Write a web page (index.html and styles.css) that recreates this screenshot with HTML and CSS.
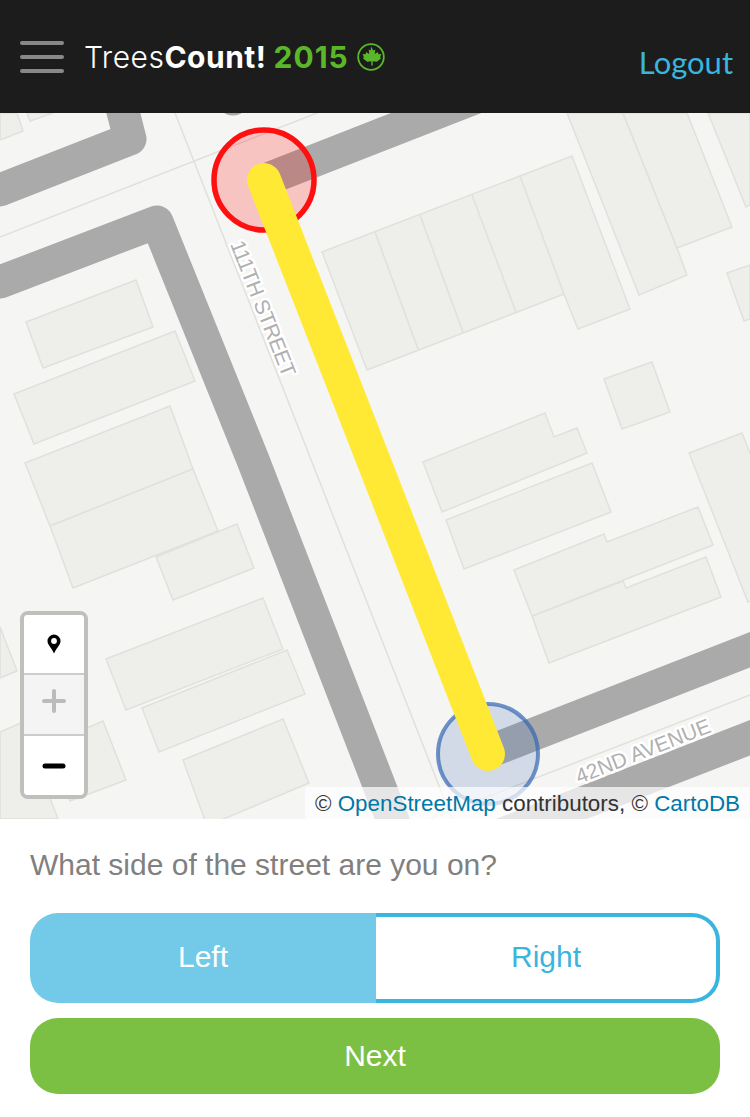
FILE: index.html
```html
<!DOCTYPE html>
<html lang="en">
<head>
    <meta charset="UTF-8">
    <title>TreesCount! 2015</title>
    <link rel="stylesheet" href="styles.css">
</head>
<body>
    <header class="topbar">
        <div class="burger"><span></span><span></span><span></span></div>
        <div class="logo">
            <span class="logo-light">Trees</span><span class="logo-bold">Count!</span>
            <span class="logo-year">2015</span>
            <svg class="logo-leaf" viewBox="0 0 28 28">
                <circle cx="14" cy="14" r="12.800" fill="none" stroke="#5ab72a" stroke-width="1.800"/>
                <path d="M14 3.500l2.300 4 2-1-.5 4.500 2.900-2 .8 2.300 2.800-.4-1.200 3.600 1.100.8-4.400 3.400-4.100-.5v4.300h-1.400v-4.300l-4.100.5-4.400-3.400 1.100-.8-1.200-3.600 2.800.4.800-2.300 2.900 2-.5-4.500 2 1z" fill="#5ab72a"/>
            </svg>
        </div>
        <a class="logout" href="#">Logout</a>
    </header>

    <main class="map">
        <svg class="map-svg" viewBox="0 113 750 706">
            <g class="roads">
                <polyline points="0,190 130,139 120,100"/>
                <polyline points="0,282 157,222 253,460 400,839"/>
                <line x1="265" y1="180" x2="500" y2="88"/>
                <line x1="488" y1="752" x2="770" y2="642"/>
                <line x1="770" y1="730" x2="500" y2="835"/>
                <line x1="233" y1="99" x2="233" y2="99"/>
            </g>
            <g class="lines">
                <line x1="175" y1="113" x2="452" y2="819"/>
                <line x1="0" y1="237" x2="317" y2="113"/>
                <line x1="430" y1="819" x2="750" y2="695"/>
                <line x1="0" y1="797" x2="8" y2="819"/>
            </g>
            <g class="blocks">
                <polygon points="0,140 23,131 17,113 0,113"/>
                <polygon points="27,113 30,121 53,113"/>
                <polygon points="26,322 136,280 153,327 43,368"/>
                <polygon points="14,394 175,331 195,381 34,444"/>
                <polygon points="25,463 170,406 193,469 50,526"/>
                <polygon points="50,526 193,469 218,531 73,588"/>
                <polygon points="156,557 237,524 254,568 173,600"/>
                <polygon points="106,659 263,598 283,649 126,710"/>
                <polygon points="142,708 287,650 305,694 159,752"/>
                <polygon points="183,760 283,719 309,783 207,826"/>
                <polygon points="0,627 17,671 0,678"/>
                <polygon points="0,732 21,723 58,819 0,819"/>
                <polygon points="48,745 103,721 126,780 70,801"/>
                <polygon points="322,252 572,156 630,309 578,329 564,294 367,370"/>
                <line x1="375" y1="232" x2="418" y2="349"/>
                <line x1="420" y1="215" x2="463" y2="332"/>
                <line x1="472" y1="195" x2="516" y2="312"/>
                <line x1="520" y1="176" x2="564" y2="294"/>
                <polygon points="567,113 639,295 687,275 677,248 623,113"/>
                <polygon points="623,113 677,248 732,227 687,113"/>
                <polygon points="708,113 746,207 750,205 750,113"/>
                <polygon points="604,379 652,362 670,412 622,429"/>
                <polygon points="727,273 750,265 750,319 744,321"/>
                <polygon points="423,462 545,413 554,437 577,428 587,453 442,512"/>
                <polygon points="446,520 592,463 611,512 464,569"/>
                <polygon points="532,616 623,581 626,588 706,557 721,597 549,663"/>
                <polygon points="514,570 604,534 607,542 698,507 713,545 532,616"/>
                <polygon points="689,453 742,433 752,458 752,601 748,602"/>
            </g>
            <text class="street street-tight" transform="translate(230 244) rotate(68.500)">111TH STREET</text>
            <text class="street" transform="translate(579 784) rotate(-21.500)">42ND AVENUE</text>
            <circle class="pin-start" cx="264" cy="180" r="50"/>
            <circle class="pin-end" cx="488" cy="754" r="50"/>
            <line class="route" x1="264" y1="180" x2="488" y2="754"/>
        </svg>

        <div class="controls">
            <button class="ctl ctl-locate" type="button">
                <svg width="14" height="20" viewBox="0 0 14 20"><path fill-rule="evenodd" d="M7 .5a6.500 6.500 0 0 0-6.500 6.500c0 4 3.500 6 6.500 12.500 3-6.500 6.500-8.500 6.500-12.500A6.500 6.500 0 0 0 7 .5zm0 3.600a2.900 2.900 0 1 1 0 5.800 2.900 2.900 0 0 1 0-5.800z"/></svg>
            </button>
            <button class="ctl ctl-plus" type="button">
                <svg width="24" height="24" viewBox="0 0 24 24"><path d="M12 2v20M2 12h20" stroke="#bbb" stroke-width="4" stroke-linecap="round"/></svg>
            </button>
            <button class="ctl ctl-minus" type="button">
                <svg width="24" height="24" viewBox="0 0 24 24"><path d="M3 12h18" stroke="#000" stroke-width="5" stroke-linecap="round"/></svg>
            </button>
        </div>

        <div class="attribution">© <a href="#">OpenStreetMap</a> contributors, © <a href="#">CartoDB</a></div>
    </main>

    <section class="panel">
        <p class="question">What side of the street are you on?</p>
        <div class="toggle">
            <button class="side side-on" type="button">Left</button>
            <button class="side" type="button">Right</button>
        </div>
        <button class="next" type="button">Next</button>
    </section>
</body>
</html>
```

FILE: styles.css
```css
body {
    margin: 0;
    background: #fff;
    font-family: "Liberation Sans", Arial, sans-serif;
}
button {
    font-family: inherit;
    cursor: pointer;
}
.topbar {
    height: 113px;
    box-sizing: border-box;
    background: #1c1c1c;
    display: flex;
    align-items: center;
    padding: 0 17px 0 20px;
}
.burger {
    width: 44px;
    display: flex;
    flex-direction: column;
    gap: 10px;
    margin-right: 20px;
}
.burger span {
    height: 4px;
    background: #888;
    border-radius: 2px;
}
.logo {
    display: flex;
    align-items: center;
    font-family: Inter, sans-serif;
    font-size: 30px;
    color: #fff;
    letter-spacing: 0.5px;
}
.logo-light {
    font-weight: 300;
}
.logo-bold {
    font-weight: 700;
}
.logo-year {
    font-weight: 700;
    color: #5ab72a;
    margin-left: 7px;
    letter-spacing: 1px;
}
.logo-leaf {
    width: 28px;
    height: 28px;
    margin-left: 8px;
}
.logout {
    margin-left: auto;
    margin-top: 10px;
    font-family: Lato, sans-serif;
    font-size: 31px;
    color: #3ab5dd;
    text-decoration: none;
}
.map {
    position: relative;
    height: 706px;
    overflow: hidden;
    background: #f5f5f3;
}
.map-svg {
    display: block;
    width: 750px;
    height: 706px;
}
.roads {
    fill: none;
    stroke: #aaa;
    stroke-width: 33;
    stroke-linecap: round;
    stroke-linejoin: round;
}
.lines {
    stroke: #e0e0dd;
    stroke-width: 1.5;
}
.blocks {
    fill: #eeefeb;
    stroke: #e0e0dd;
    stroke-width: 1.5;
}
.street {
    font-family: "Liberation Sans", Arial, sans-serif;
    font-size: 21px;
    fill: #b0b0b0;
    stroke: #fff;
    stroke-width: 5px;
    stroke-linejoin: round;
    paint-order: stroke;
}
.street-tight {
    letter-spacing: -0.4px;
}
.pin-start {
    fill: rgba(255, 0, 0, 0.2);
    stroke: #ff1010;
    stroke-width: 5.5;
}
.pin-end {
    fill: rgba(65, 110, 180, 0.2);
    stroke: rgba(51, 102, 178, 0.7);
    stroke-width: 4;
}
.route {
    stroke: #ffe935;
    stroke-width: 34;
    stroke-linecap: round;
}
.controls {
    position: absolute;
    left: 20px;
    top: 498px;
    width: 60px;
    border: 4px solid #bfbfbb;
    border-radius: 8px;
    overflow: hidden;
    background: #fff;
    display: flex;
    flex-direction: column;
}
.ctl {
    padding: 0;
    border: 0;
    background: #fff;
    display: flex;
    align-items: center;
    justify-content: center;
}
.ctl + .ctl {
    border-top: 2px solid #ccc;
}
.ctl-locate {
    height: 58px;
}
.ctl-plus {
    height: 61px;
    background: #f4f4f4;
}
.ctl-plus svg {
    margin-bottom: 7px;
}
.ctl-minus {
    height: 61px;
}
.attribution {
    position: absolute;
    right: 0;
    bottom: 0;
    height: 32px;
    line-height: 34px;
    padding: 0 10px;
    background: rgba(255, 255, 255, 0.7);
    font-size: 22.4px;
    color: #333;
}
.attribution a {
    color: #0078a8;
    text-decoration: none;
}
.panel {
    padding: 30px 30px 23px;
    display: flex;
    flex-direction: column;
}
.question {
    margin: 0 0 32px;
    font-size: 30px;
    line-height: 32px;
    color: #808080;
}
.toggle {
    display: flex;
    height: 90px;
    margin-bottom: 15px;
}
.side {
    flex: 1;
    padding: 0 0 2px;
    border: 4px solid #3ab5dd;
    border-left: 0;
    border-radius: 0 28px 28px 0;
    background: #fff;
    color: #3ab5dd;
    font-size: 30px;
}
.side-on {
    flex: none;
    width: 346px;
    border: 0;
    border-radius: 28px 0 0 28px;
    background: #72cae8;
    color: #fff;
}
.next {
    height: 76px;
    border: 0;
    border-radius: 28px;
    background: #7bc043;
    color: #fff;
    font-size: 30px;
}
```
